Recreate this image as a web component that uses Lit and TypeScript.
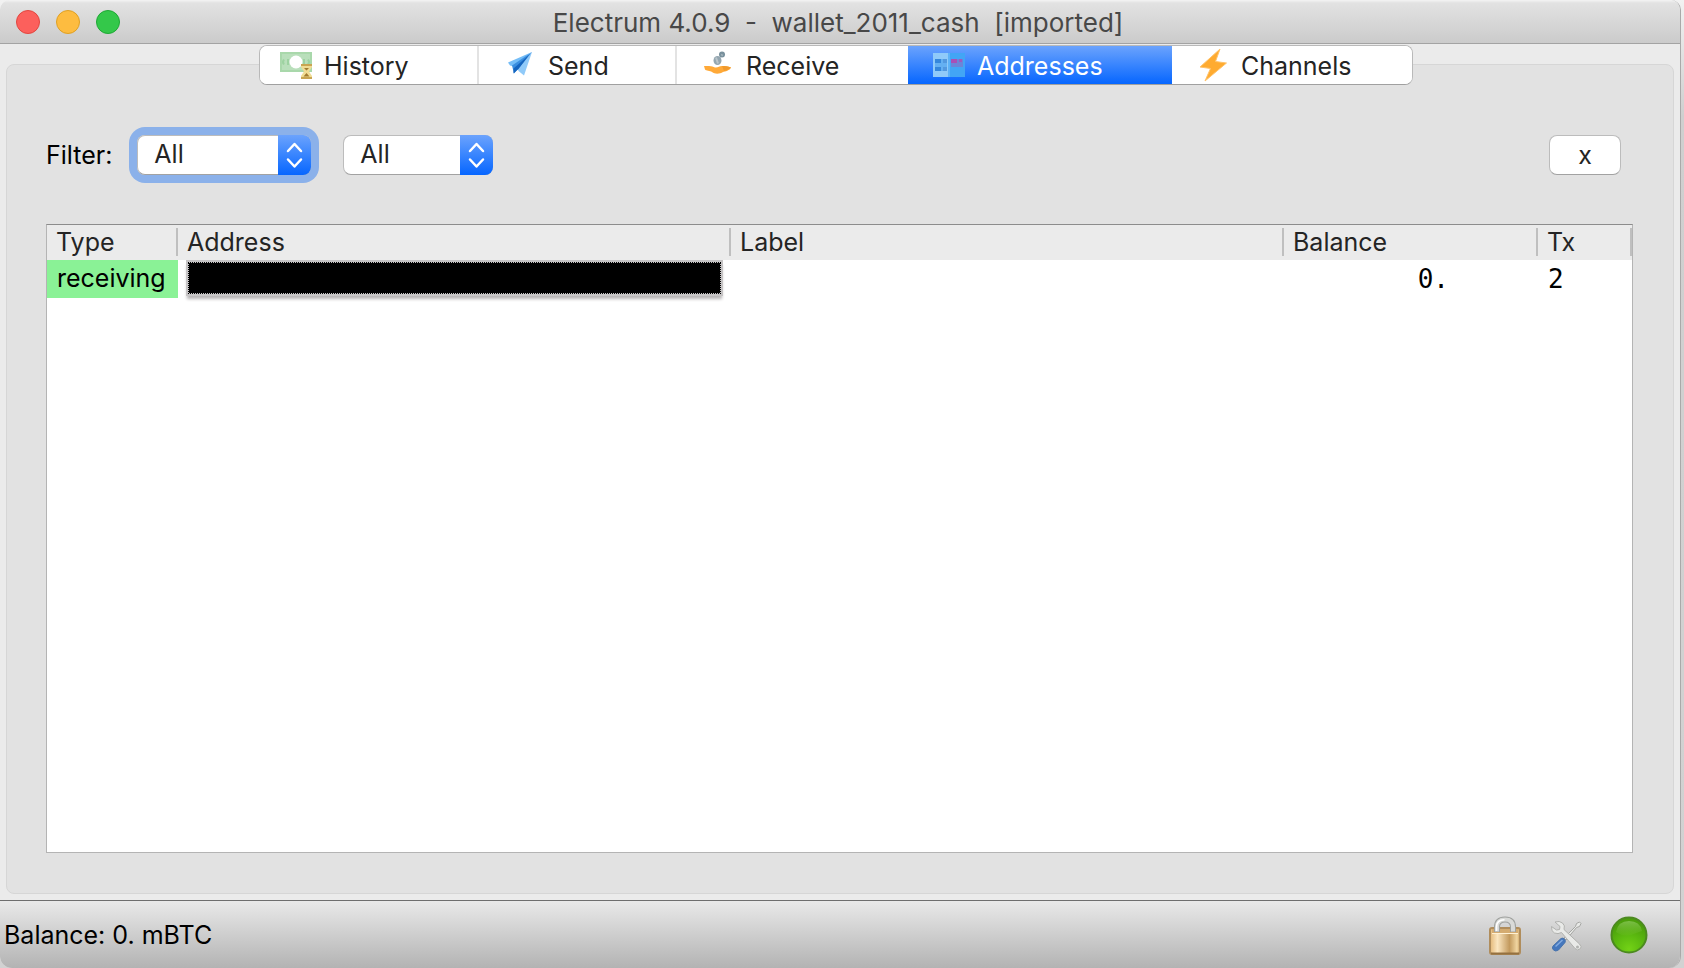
import { LitElement, html, css, svg, nothing } from "lit";
import { customElement, property, state } from "lit/decorators.js";
import { classMap } from "lit/directives/class-map.js";
import { styleMap } from "lit/directives/style-map.js";

const historyIcon = svg`<svg viewBox="0 0 32 28" width="32" height="28" aria-hidden="true">
  <rect x="0" y="1" width="32" height="20" fill="#a9d8ab"/>
  <rect x="2" y="3" width="28" height="16" fill="#b9dfbb"/>
  <path d="M4 8.500q-2 2.500 0 5M28 8.500q2 2.500 0 5M8 8v6M24 8v5" stroke="#9dd2a1" stroke-width="2" fill="none"/>
  <circle cx="16" cy="11" r="6.500" fill="#fff"/>
  <path d="M21 13h11v3l-3 4.500 3 4.500v3H21v-3l3-4.500-3-4.500z" fill="#f0dc94"/>
  <path d="M21 13h11v2H21zM21 26h11v2H21z" fill="#c9a552"/>
  <path d="M23.500 25.500l3-3.500 3 3.500zM24 17h5l-2.500 2.500z" fill="#a27c30"/>
</svg>`;

const sendIcon = svg`<svg viewBox="0 0 32 28" width="32" height="28" aria-hidden="true">
  <path d="M28 1L4 11.500l2 3 4 1z" fill="#74bdf7"/>
  <path d="M28 1L20 24.500 14.500 20l-1-3z" fill="#90caf9"/>
  <path d="M28 1L8 14.500l2 8z" fill="#3b8fe0"/>
  <path d="M26 3L9.500 17.500v5l5-4.500z" fill="#1565c0"/>
</svg>`;

const receiveIcon = svg`<svg viewBox="0 0 32 28" width="32" height="28" aria-hidden="true">
  <ellipse cx="15.500" cy="9.500" rx="4" ry="4.500" fill="#94a6b0"/>
  <path d="M14 6.500l2 6" stroke="#b9c5cb" stroke-width="2"/>
  <circle cx="20" cy="3.500" r="3" fill="#78909c"/>
  <path d="M19 3.500l2 1" stroke="#a3b3bb" stroke-width="1.500"/>
  <path d="M2 15h5c3 0 4 1 6 1.500 3 .5 4-1.500 7-1.500 3 .3 6 0 9 1.500-1 3-6 4-8 4.500-3 2-8 2.500-11 0-2-1.500-6-1-7-2.500z" fill="#ffa938"/>
  <path d="M20 15c3 0 6 0 9 1.500-1 1.500-4 2.500-7 3.500z" fill="#f19a2c"/>
</svg>`;

const addressesIcon = svg`<svg viewBox="0 0 32 28" width="32" height="28" aria-hidden="true">
  <rect x="0" y="2" width="16" height="24" fill="#90caf9"/>
  <rect x="16" y="2" width="16" height="24" fill="#42a5f5"/>
  <rect x="2" y="8" width="12" height="12" fill="#64b0f2"/>
  <path d="M2 8h6v4H2zM2 16h6v4H2z" fill="#3587dc"/>
  <path d="M10 8h4v4h-4zM10 16h4v4h-4z" fill="#5399e0"/>
  <path d="M16 2v24" stroke="#5db2f7" stroke-width="2"/>
  <rect x="18" y="8" width="12" height="8" fill="#6b85d8"/>
  <path d="M18 8h6v4h-6z" fill="#a94fb6"/>
  <path d="M26 8h3v3h-3z" fill="#9b5bc2"/>
</svg>`;

const channelsIcon = svg`<svg viewBox="0 0 32 36" width="32" height="36" aria-hidden="true">
  <path d="M23 2L3 20l10.500 1.500L8 34 29.500 16l-11-1.500z" fill="#ffab30"/>
  <path d="M23 2L3 20l10.500 1.500L8 34 29.500 16l-11-1.500z" fill="none" stroke="#ffc36b" stroke-width="1"/>
</svg>`;

const chevrons = svg`<svg viewBox="0 0 32 38" width="32" height="38" aria-hidden="true">
  <path d="M9 15l6.500-7 6.500 7M9 23.500l6.500 7 6.500-7" fill="none" stroke="#fff" stroke-width="2.500" stroke-linecap="round" stroke-linejoin="round"/>
</svg>`;

const lockIcon = svg`<svg viewBox="0 0 34 40" width="34" height="40" aria-hidden="true">
  <defs>
    <linearGradient id="brass" x1="0" x2="1">
      <stop offset="0" stop-color="#e3b878"/><stop offset=".25" stop-color="#fbe6c0"/>
      <stop offset=".65" stop-color="#c39a5e"/><stop offset=".9" stop-color="#f1d6a2"/><stop offset="1" stop-color="#c79b5b"/>
    </linearGradient>
  </defs>
  <rect x="2" y="13" width="30" height="26" rx="2" fill="url(#brass)" stroke="#b08d5c" stroke-width="2"/>
  <path d="M4 14h26v4H4z" fill="#d4ab70"/>
  <path d="M4 18.500h26" stroke="#fff1d4"/>
  <path d="M3 38.500h28" stroke="#957140" stroke-width="2"/>
  <path d="M9 17V12q0-7.500 8-7.500t8 7.500v5" fill="none" stroke="#9fa19e" stroke-width="6"/>
  <path d="M9 16.500V12q0-7.500 8-7.500t8 7.500v4.500" fill="none" stroke="#d9dad8" stroke-width="4"/>
  <path d="M8.500 16V12q0-7 8-7.200" fill="none" stroke="#fff" stroke-width="1.500"/>
</svg>`;

const toolsIcon = svg`<svg viewBox="0 0 34 34" width="34" height="34" aria-hidden="true">
  <path d="M15 20L26.500 8.500l1-3 3-1.500 1.500 1.500-1.500 3-3 1L17 22z" fill="#e8e9e7" stroke="#a5a6a3"/>
  <path d="M4 28l8-7.500q2-1 3.500.500t.500 3.500L9.500 32q-3 2-5 0t-.5-4z" fill="#4577bd" stroke="#4a74ab"/>
  <path d="M6.500 28.500l7-6.500" stroke="#83abe0" stroke-width="1.500"/>
  <path d="M6 4l5 4.500-.5 3-3 .5-5-3.500Q2 13.500 5.500 15t7-.5L26 30.500q2.500 2.500 5 .5t-.5-5L15 11.500q1.500-4-1.500-6.500T6 4z" fill="#e9eae8" stroke="#b0b1ae"/>
  <circle cx="28.500" cy="29" r="1.500" fill="#b2b4b1"/>
</svg>`;

const statusIcon = svg`<svg viewBox="0 0 38 38" width="38" height="38" aria-hidden="true">
  <defs>
    <radialGradient id="glow" cx=".5" cy=".9" r=".75">
      <stop offset="0" stop-color="#73d216"/><stop offset=".5" stop-color="#5dbb10"/><stop offset="1" stop-color="#4b9f0b"/>
    </radialGradient>
    <linearGradient id="shine" x1="0" y1="0" x2="0" y2="1">
      <stop offset="0" stop-color="#8cc95c" stop-opacity=".75"/><stop offset="1" stop-color="#73bf30" stop-opacity=".15"/>
    </linearGradient>
  </defs>
  <circle cx="19" cy="19" r="17.500" fill="url(#glow)" stroke="#4c8a20" stroke-width="2"/>
  <path d="M6 16Q8 5 19 5t13 10q-6 2-11 4-8 2-15-3z" fill="url(#shine)"/>
</svg>`;

interface TabInfo {
  id: string;
  label: string;
  icon: unknown;
  width: number;
}

const TABS: TabInfo[] = [
  { id: "history", label: "History", icon: historyIcon, width: 219 },
  { id: "send", label: "Send", icon: sendIcon, width: 198 },
  { id: "receive", label: "Receive", icon: receiveIcon, width: 231 },
  { id: "addresses", label: "Addresses", icon: addressesIcon, width: 264 },
  { id: "channels", label: "Channels", icon: channelsIcon, width: 240 },
];

@customElement("wallet-tabs")
class WalletTabs extends LitElement {
  @property() selected = "addresses";

  static styles = css`
    :host {
      display: flex;
      justify-content: center;
      padding-right: 8px;
    }
    .bar {
      display: flex;
      height: 38px;
      border: 1px solid #b9b9b9;
      border-bottom-color: #a0a0a0;
      border-radius: 8px;
      background: #fff;
      overflow: hidden;
    }
    .tab {
      display: flex;
      align-items: center;
      gap: 12px;
      box-sizing: border-box;
      padding: 2px 0 0 25px;
      border: 0;
      border-right: 2px solid #e3e3e3;
      background: #fff;
      color: #242424;
      font: inherit;
      white-space: nowrap;
    }
    .tab:first-child {
      padding-left: 20px;
    }
    .tab:last-child,
    .tab.before {
      border-right: 0;
    }
    .tab.active {
      border-right: 0;
      background: linear-gradient(#6ba3fd, #0666ff);
      color: #fff;
    }
    svg {
      flex: none;
      margin-top: -2px;
    }
  `;

  private pick(id: string) {
    this.dispatchEvent(new CustomEvent("tab-change", { detail: id }));
  }

  render() {
    const active = TABS.findIndex((t) => t.id === this.selected);
    return html`<div class="bar" role="tablist">
      ${TABS.map(
        (t, i) => html`<button
          class=${classMap({ tab: true, active: i === active, before: i === active - 1 })}
          style=${styleMap({ width: `${t.width}px` })}
          role="tab"
          aria-selected=${i === active ? "true" : "false"}
          @click=${() => this.pick(t.id)}
        >${t.icon}<span>${t.label}</span></button>`
      )}
    </div>`;
  }
}

@customElement("popup-select")
class PopupSelect extends LitElement {
  @property() label = "";
  @property({ type: Array }) options: string[] = [];

  static styles = css`
    :host {
      display: grid;
      box-sizing: border-box;
      height: 40px;
      border-radius: 8px;
    }
    select {
      grid-area: 1 / 1;
      appearance: none;
      box-sizing: border-box;
      width: 100%;
      height: 100%;
      margin: 0;
      padding: 0 48px 2px 16px;
      border: 1px solid #bcbcbc;
      border-bottom-color: #a2a2a2;
      border-radius: 8px;
      outline: 0;
      background: #fff;
      color: #242424;
      font: inherit;
    }
    .stepper {
      grid-area: 1 / 1;
      justify-self: end;
      display: flex;
      align-items: center;
      justify-content: center;
      width: 33px;
      border-radius: 0 8px 8px 0;
      background: linear-gradient(#6ba3fd, #0666ff);
      pointer-events: none;
    }
  `;

  render() {
    return html`<select aria-label=${this.label}>
        ${this.options.map((o) => html`<option>${o}</option>`)}
      </select>
      <span class="stepper">${chevrons}</span>`;
  }
}

interface AddressRow {
  type: string;
  balance: string;
  tx: number;
}

@customElement("address-table")
class AddressTable extends LitElement {
  @property({ type: Array }) rows: AddressRow[] = [];

  static styles = css`
    :host {
      display: block;
      border: 1px solid #b4b4b4;
      border-top-color: #8c8c8c;
      background: #fff;
    }
    table {
      width: 100%;
      table-layout: fixed;
      border-collapse: collapse;
    }
    .type { width: 131px; }
    .balance { width: 254px; }
    .tx { width: 94px; }
    th {
      height: 35px;
      padding: 0;
      background: #ebebeb;
      color: #242424;
      font-weight: 400;
      text-align: left;
    }
    .head {
      display: block;
      height: 28px;
      margin-bottom: 2px;
      padding-left: 9px;
      border-right: 2px solid #bfbfbf;
      line-height: 28px;
    }
    td {
      height: 36px;
      padding: 0 10px 2px;
      color: #000;
    }
    td.kind {
      background: #8af296;
    }
    td.mono {
      padding-bottom: 0;
      font-family: "DejaVu Sans Mono", monospace;
      font-size: 26px;
    }
    td.amount {
      padding-right: 89px;
      text-align: right;
    }
    .redacted {
      display: block;
      height: 30px;
      border: 1px dotted #000;
      background: #000 padding-box;
      box-shadow: 0 0 0 2px #c6c4c5, 0 4px 3px 1px #b5b3b4;
    }
  `;

  render() {
    return html`<table>
      <colgroup>
        <col class="type" /><col /><col /><col class="balance" /><col class="tx" />
      </colgroup>
      <thead>
        <tr>
          ${["Type", "Address", "Label", "Balance", "Tx"].map(
            (h) => html`<th scope="col"><span class="head">${h}</span></th>`
          )}
        </tr>
      </thead>
      <tbody>
        ${this.rows.map(
          (r) => html`<tr>
            <td class="kind">${r.type}</td>
            <td><span class="redacted"></span></td>
            <td>${nothing}</td>
            <td class="mono amount">${r.balance}</td>
            <td class="mono">${r.tx}</td>
          </tr>`
        )}
      </tbody>
    </table>`;
  }
}

@customElement("app-root")
class AppRoot extends LitElement {
  @state() private tab = "addresses";

  static styles = css`
    :host {
      display: flex;
      box-sizing: border-box;
      min-height: 100vh;
      padding-right: 3px;
      background: linear-gradient(#f2f2f2, #cfcfcf 12%, #d2d2d2);
      font: 25px/30px Inter, "Liberation Sans", sans-serif;
      color: #000;
    }
    .window {
      flex: 1;
      display: flex;
      flex-direction: column;
      border-right: 1px solid #a9a9a9;
      border-radius: 10px 10px 12px 12px;
      background: #ebebeb;
      overflow: hidden;
    }
    .titlebar {
      display: grid;
      grid-template-columns: 1fr auto 1fr;
      align-items: center;
      height: 43px;
      padding: 0 16px;
      border-bottom: 1px solid #a3a3a3;
      background: linear-gradient(#f4f4f4, #e2e2e2 3px, #cbcbcb);
    }
    .lights {
      display: flex;
      gap: 16px;
    }
    .light {
      box-sizing: border-box;
      width: 24px;
      height: 24px;
      padding: 0;
      border: 1px solid #e2463f;
      border-radius: 50%;
      background: #fc605c;
    }
    .light.min {
      border-color: #dfa023;
      background: #fdbc40;
    }
    .light.max {
      border-color: #1fa835;
      background: #34c84a;
    }
    h1 {
      margin: 0;
      padding: 2px 4px 0 0;
      color: #484848;
      font-size: 26px;
      font-weight: 400;
      white-space: pre;
    }
    main {
      flex: 1;
      display: flex;
      flex-direction: column;
      padding: 1px 6px 6px;
    }
    wallet-tabs {
      z-index: 1;
      margin-bottom: -21px;
    }
    .panel {
      flex: 1;
      display: flex;
      flex-direction: column;
      padding: 61px 40px 40px 39px;
      border: 1px solid #d6d6d6;
      border-radius: 8px;
      background: #e2e2e2;
    }
    .filters {
      display: flex;
      align-items: center;
      height: 58px;
      padding-right: 12px;
    }
    .first {
      width: 174px;
      margin: 0 32px 0 25px;
      box-shadow: 0 0 0 8px #8bb1ea;
    }
    .second {
      width: 150px;
    }
    .close {
      width: 72px;
      height: 40px;
      margin-left: auto;
      padding: 0;
      border: 1px solid #bcbcbc;
      border-bottom-color: #a2a2a2;
      border-radius: 8px;
      background: #fff;
      color: #242424;
      font: inherit;
    }
    address-table {
      flex: 1;
      margin-top: 40px;
    }
    footer {
      display: flex;
      align-items: center;
      height: 67px;
      padding: 0 32px 0 4px;
      border-top: 1px solid #6e6e6e;
      background: linear-gradient(#e9e9e9, #b3b3b3);
    }
    .balance {
      flex: 1;
    }
    .tools {
      display: flex;
      align-items: center;
      gap: 27px;
    }
    .tool {
      display: flex;
      padding: 0;
      border: 0;
      background: none;
    }
  `;

  render() {
    return html`<div class="window">
      <header class="titlebar">
        <div class="lights">
          <button class="light" aria-label="Close"></button>
          <button class="light min" aria-label="Minimize"></button>
          <button class="light max" aria-label="Zoom"></button>
        </div>
        <h1>${"Electrum 4.0.9  -  wallet_2011_cash  [imported]"}</h1>
      </header>
      <main>
        <wallet-tabs
          .selected=${this.tab}
          @tab-change=${(e: CustomEvent<string>) => (this.tab = e.detail)}
        ></wallet-tabs>
        <section class="panel">
          <div class="filters">
            <span>Filter:</span>
            <popup-select class="first" label="Filter by type" .options=${["All", "Receiving", "Change"]}></popup-select>
            <popup-select class="second" label="Filter by state" .options=${["All", "Unused", "Funded", "Used"]}></popup-select>
            <button class="close">x</button>
          </div>
          <address-table .rows=${[{ type: "receiving", balance: "0.", tx: 2 }]}></address-table>
        </section>
      </main>
      <footer>
        <span class="balance">Balance: 0. mBTC</span>
        <div class="tools">
          <button class="tool" aria-label="Password">${lockIcon}</button>
          <button class="tool" aria-label="Preferences">${toolsIcon}</button>
          <button class="tool" aria-label="Network">${statusIcon}</button>
        </div>
      </footer>
    </div>`;
  }
}
